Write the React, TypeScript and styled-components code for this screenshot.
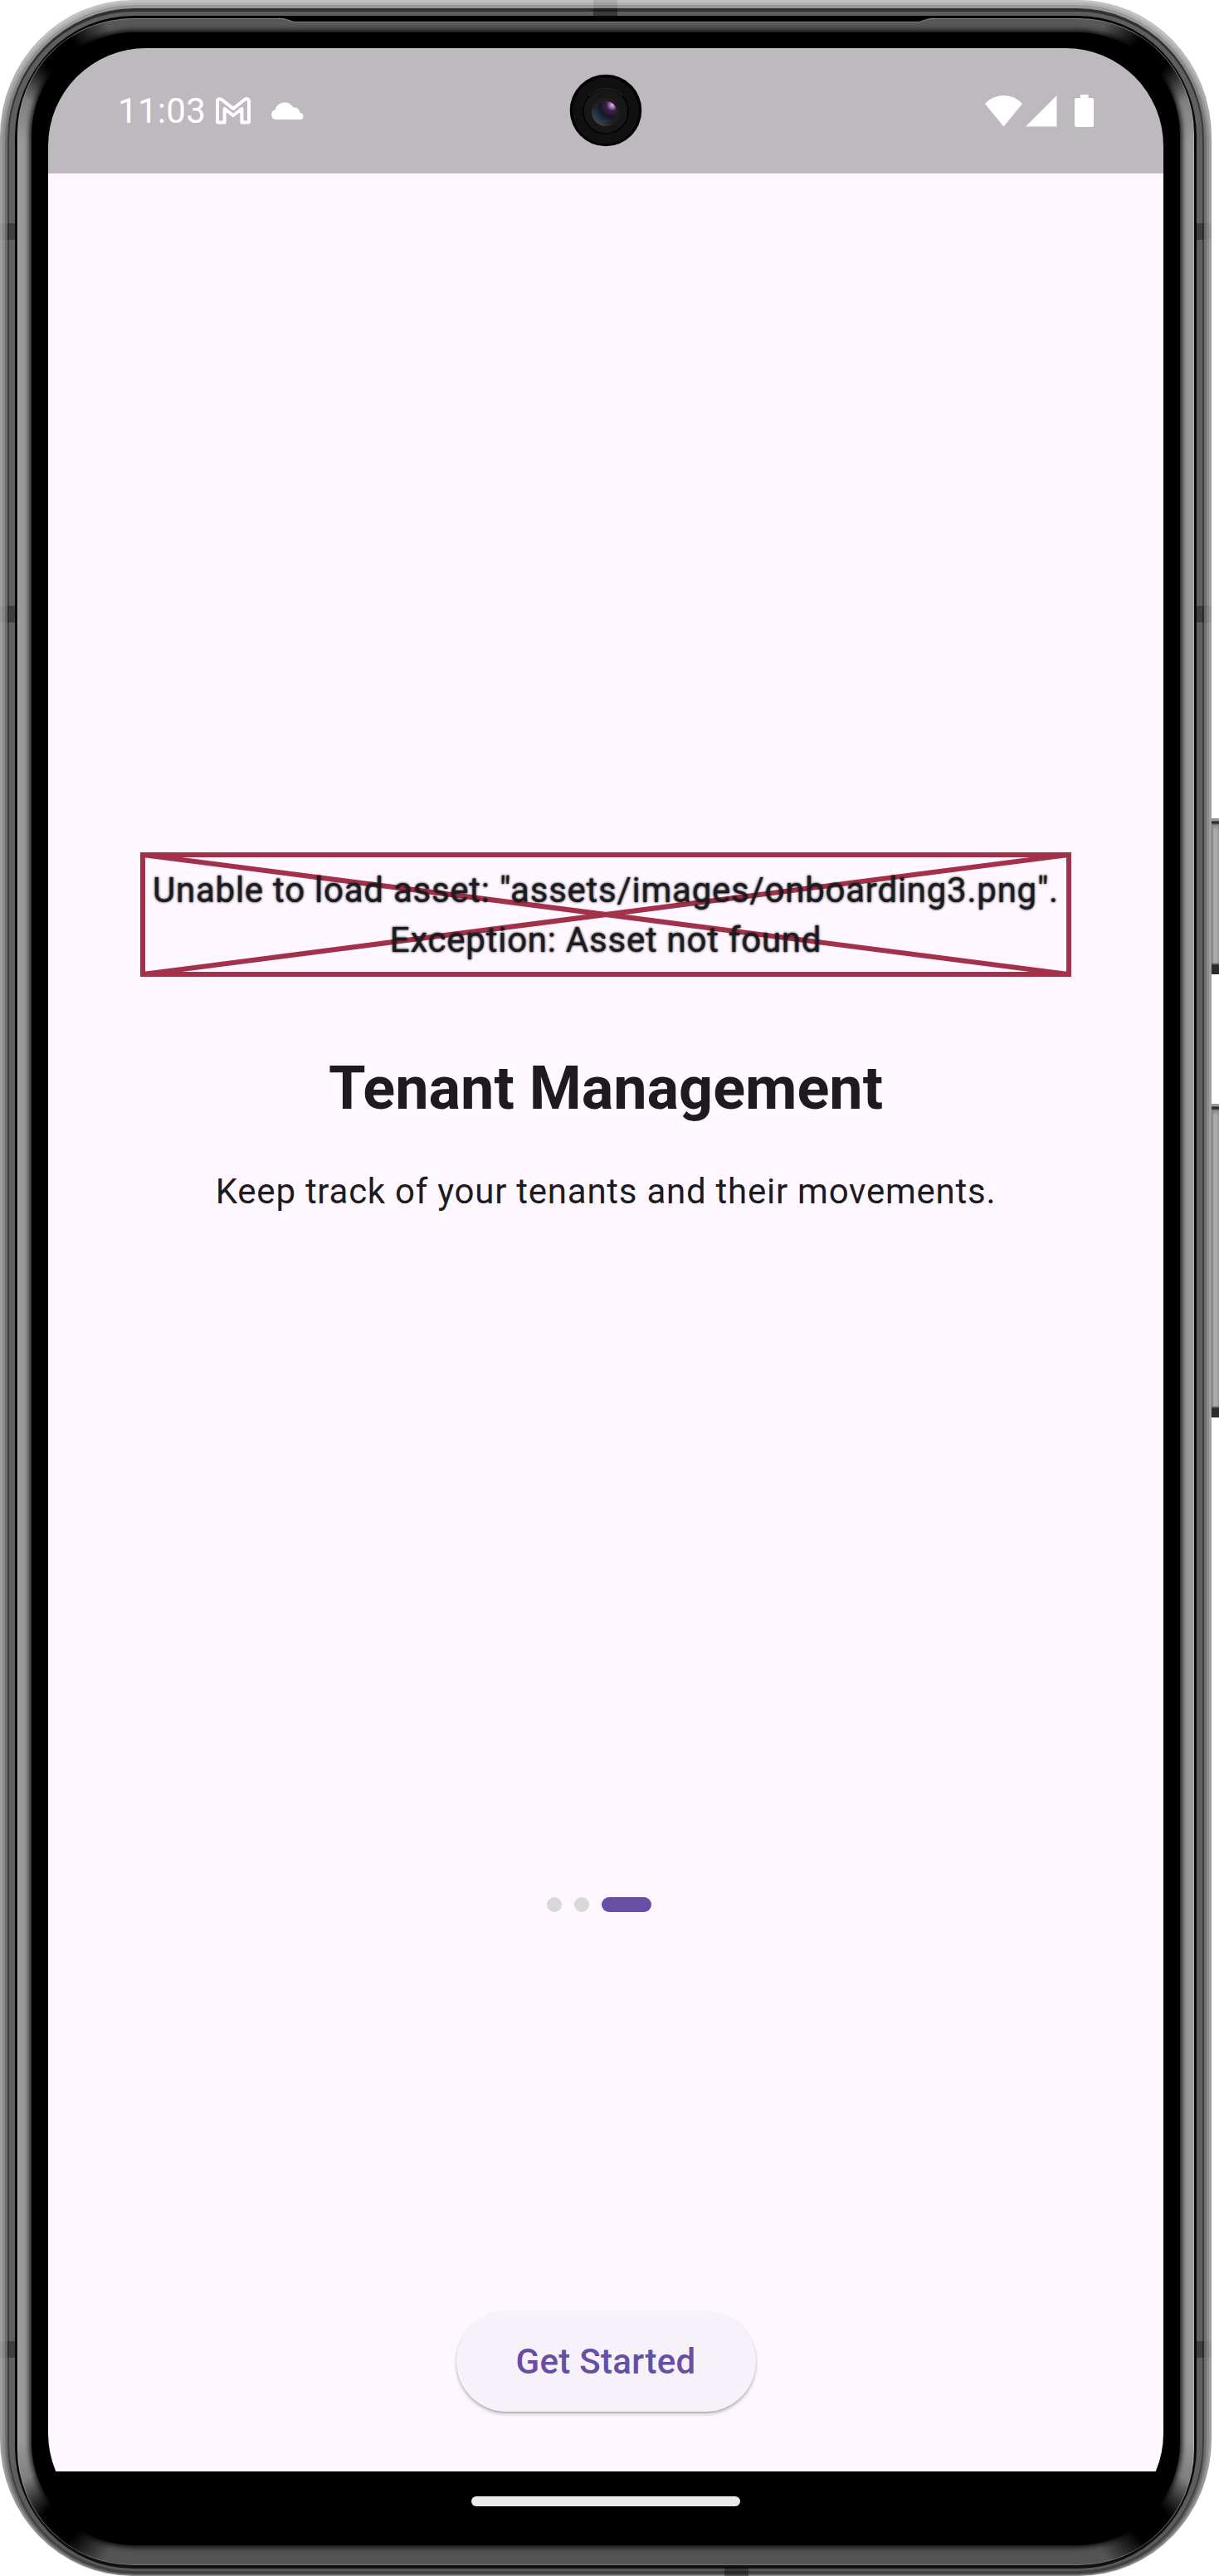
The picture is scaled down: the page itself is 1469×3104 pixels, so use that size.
import React from "react";
import styled, { createGlobalStyle } from "styled-components";

const GlobalStyle = createGlobalStyle`
  body { margin: 0; background: #fff; overflow: hidden; }
  * { box-sizing: border-box; }
`;

const Stage = styled.div`
  display: flex;
  width: 1469px;
  height: 3104px;
  overflow: hidden;
  font-family: Roboto, "Noto Sans", sans-serif;
`;

const Phone = styled.div`
  position: relative;
  display: flex;
  width: 1460px;
  height: 3104px;
  flex: none;
`;

/* One concentric band of the metal case; colours run top / sides / bottom. */
const Ring = styled.div<{ $pad: string; $radius: string; $colors: [string, string, string] }>`
  display: flex;
  flex: 1;
  padding: ${(p) => p.$pad};
  border-radius: ${(p) => p.$radius};
  background: linear-gradient(
    ${(p) => p.$colors[0]} 30px,
    ${(p) => p.$colors[1]} 170px,
    ${(p) => p.$colors[1]} calc(100% - 150px),
    ${(p) => p.$colors[2]} calc(100% - 20px)
  );
`;

const Bevel = styled.div`
  display: flex;
  flex: 1;
  padding: 16px 16px 23px;
  border-radius: 137px;
  background:
    radial-gradient(circle at 50px 42px, #000 22px, transparent 68px),
    radial-gradient(circle at calc(100% - 50px) 42px, #000 22px, transparent 68px),
    radial-gradient(circle at 50px calc(100% - 48px), #000 22px, transparent 68px),
    radial-gradient(circle at calc(100% - 50px) calc(100% - 48px), #000 22px, transparent 68px),
    linear-gradient(#585858 20px, #9a9a9a 150px, #9a9a9a calc(100% - 150px), #545454 calc(100% - 30px));
`;

const Glass = styled.div`
  display: flex;
  flex: 1;
  flex-direction: column;
  align-items: center;
  padding: 19px 20px 0;
  border-radius: 124px;
  background: #000;
  box-shadow: 0 0 7px 2px #000;
`;

const Screen = styled.div`
  display: flex;
  flex-direction: column;
  flex: none;
  width: 1344px;
  height: 2992px;
  overflow: hidden;
  border-radius: 118px;
  background: #000;
`;

const StatusBar = styled.header`
  position: relative;
  display: flex;
  flex: none;
  align-items: center;
  justify-content: space-between;
  height: 151px;
  padding: 0 83px 0 84px;
  background: #beb9bf;
  color: #fff;
`;

const StatusGroup = styled.div`
  display: flex;
  align-items: center;
  height: 151px;
`;

const Clock = styled.span`
  width: 118px;
  font-size: 42px;
  line-height: 151px;
  letter-spacing: 0.3px;
  white-space: nowrap;
`;

const CloudSlot = styled.span`
  display: flex;
  margin: 0 0 2px 24px;
`;

const Camera = styled.svg`
  position: absolute;
  left: 628px;
  top: 31px;
`;

const Page = styled.main`
  display: flex;
  flex-direction: column;
  align-items: center;
  flex: none;
  height: 2769px;
  padding-top: 818px;
  background: #fef7ff;
  color: #1d1b20;
`;

const AssetError = styled.div`
  position: relative;
  width: 1122px;
  height: 150px;
  padding-top: 16px;
  flex: none;
`;

const Cross = styled.svg`
  position: absolute;
  inset: 0;
`;

const ErrorText = styled.p`
  position: relative;
  margin: 0;
  font-size: 42px;
  font-weight: 400;
  line-height: 60px;
  letter-spacing: 0.75px;
  text-align: center;
  white-space: nowrap;
  text-shadow: 0 0 3px #000;
`;

const Title = styled.h1`
  margin: 93px 0 0;
  font-size: 72px;
  font-weight: 700;
  line-height: 84px;
  white-space: nowrap;
`;

const Subtitle = styled.p`
  margin: 52px 0 0;
  font-size: 42px;
  line-height: 60px;
  letter-spacing: 0.75px;
  white-space: nowrap;
`;

const Dots = styled.div`
  display: flex;
  gap: 15px;
  margin-top: 819.5px;
  padding-right: 16px;
`;

const Dot = styled.span<{ $active?: boolean }>`
  width: ${(p) => (p.$active ? "60px" : "18px")};
  height: 18px;
  border-radius: 9px;
  background: ${(p) => (p.$active ? "#6750a4" : "#d8d8d8")};
`;

const StartButton = styled.button`
  width: 361px;
  height: 121px;
  margin-top: 481.5px;
  padding: 0;
  border: 0;
  border-radius: 61px;
  background: #f7f2fa;
  color: #6750a4;
  font: 500 42px/120px Roboto, sans-serif;
  letter-spacing: 0.3px;
  box-shadow: 0 3px 5px -1px rgba(0, 0, 0, 0.3), 0 1px 2px rgba(0, 0, 0, 0.14);
`;

const NavBar = styled.footer`
  display: flex;
  justify-content: center;
  padding-top: 30px;
`;

const NavHandle = styled.span`
  width: 324px;
  height: 12px;
  border-radius: 6px;
  background: #ebebeb;
`;

const SideSeam = styled.i<{ $top: number; $right?: boolean }>`
  position: absolute;
  top: ${(p) => p.$top}px;
  ${(p) => (p.$right ? "right: 0; transform: scaleX(-1);" : "left: 0;")}
  width: 18px;
  height: 20px;
  background: linear-gradient(90deg, rgba(0, 0, 0, 0.05) 9px, rgba(0, 0, 0, 0.34) 9px);
`;

const EdgeSeam = styled.i<{ $left: number; $bottom?: boolean }>`
  position: absolute;
  left: ${(p) => p.$left}px;
  ${(p) => (p.$bottom ? "bottom: 0; height: 10px;" : "top: 0; height: 19px;")}
  width: 29px;
  background: ${(p) => (p.$bottom ? "rgba(0, 0, 0, 0.35)" : "linear-gradient(rgba(0,0,0,.1) 10px, rgba(0,0,0,.38) 10px)")};
`;

const Earpiece = styled.svg`
  position: absolute;
  left: 336px;
  top: 20px;
`;

const Keys = styled.div`
  display: flex;
  flex-direction: column;
  gap: 156px;
  padding-top: 986px;
  width: 9px;
`;

const Key = styled.span<{ $height: number }>`
  height: ${(p) => p.$height}px;
  background:
    linear-gradient(#999 3px, #222 4px, #333 6px, #888 8px, transparent 14px),
    linear-gradient(0deg, #2c2c2c 11px, #555 12px, transparent 14px),
    linear-gradient(90deg, #777 1px, #a9a9a9 2px, #a9a9a9 7px, #888);
`;

const rings: { pad: string; radius: string; colors: [string, string, string] }[] = [
  { pad: "3px 3px 1px", radius: "160px / 165px", colors: ["#c2c2c2", "#9f9f9f", "#8c8c8c"] },
  { pad: "3px 3px 1px", radius: "158px / 163px", colors: ["#b2b2b2", "#8a8a8a", "#6c6c6c"] },
  { pad: "4px 3px 1px", radius: "156px / 160px", colors: ["#979797", "#6e6e6e", "#505050"] },
  { pad: "4px 2px 3px", radius: "153px / 157px", colors: ["#303030", "#3e3e3e", "#404040"] },
  { pad: "5px 7px 3px", radius: "150px / 153px", colors: ["#5e5e5e", "#606060", "#585858"] },
  { pad: "3px 3px 4px", radius: "143px / 146px", colors: ["#050505", "#080808", "#101010"] },
  { pad: "1px", radius: "139px", colors: ["#808080", "#b4b4b4", "#707070"] },
];

const CaseRings = ({ index = 0, children }: { index?: number; children: React.ReactNode }) => {
  if (index === rings.length) return <>{children}</>;
  const r = rings[index];
  return (
    <Ring $pad={r.pad} $radius={r.radius} $colors={r.colors}>
      <CaseRings index={index + 1}>{children}</CaseRings>
    </Ring>
  );
};

const MailIcon = () => (
  <svg width="42" height="33" viewBox="0 0 42 33" fill="none" stroke="#fff" strokeWidth="4" strokeLinejoin="round">
    <path d="M2 5.500C2 2.400 5 1.200 7.500 3.200L21 14 34.500 3.200C37 1.200 40 2.400 40 5.500V29.200Q40 30.600 38.500 30.600H31.400V14L21 22.300 10.600 14V30.600H3.500Q2 30.600 2 29.200Z" />
  </svg>
);

const CloudIcon = () => (
  <svg width="42" height="24" viewBox="0 0 42 24" fill="#fff">
    <path d="M6.5 23A6 6 0 0 1 5.7 11.2A11.8 11.8 0 0 1 27.2 8.2A7.6 7.6 0 0 1 35.6 15A4.2 4.2 0 0 1 37 23Z" />
  </svg>
);

const SignalIcons = () => (
  <svg width="132" height="40" viewBox="0 0 132 40" fill="#fff">
    <path d="M0 11Q9.500 1 22.500 1T45 11L22.500 38.500Z" />
    <path d="M86.500 1V38.500H49Z" />
    <path d="M115 0H124.500V4H129Q131 4 131 6V37Q131 39 129 39H110Q108 39 108 37V6Q108 4 110 4H115Z" />
  </svg>
);

const CameraLens = () => (
  <Camera width="88" height="88" viewBox="0 0 88 88">
    <defs>
      <radialGradient id="lens" cx="0.8" cy="0.2" r="0.9">
        <stop offset="0" stopColor="#e9b8f5" />
        <stop offset="0.12" stopColor="#a878bd" />
        <stop offset="0.3" stopColor="#3a2148" />
        <stop offset="0.65" stopColor="#1b1524" />
        <stop offset="1" stopColor="#1c3e55" />
      </radialGradient>
      <linearGradient id="rim" x1="0" y1="1" x2="1" y2="0">
        <stop offset="0" stopColor="#5c5c5c" />
        <stop offset="0.4" stopColor="#202020" />
        <stop offset="1" stopColor="#1c1c1c" />
      </linearGradient>
    </defs>
    <circle cx="44" cy="44" r="43.300" fill="#000" />
    <circle cx="44" cy="44.500" r="40" fill="#101010" />
    <circle cx="44" cy="45" r="27" fill="#171717" stroke="#020202" strokeWidth="1.500" />
    <path d="M24 26A28 28 0 0 1 64 26" fill="none" stroke="#303030" strokeWidth="1" />
    <circle cx="44" cy="46" r="17" fill="url(#rim)" />
    <circle cx="44" cy="45.500" r="13" fill="url(#lens)" />
  </Camera>
);

export default function App() {
  return (
    <>
      <GlobalStyle />
      <Stage>
        <Phone>
          <CaseRings>
            <Bevel>
              <Glass>
                <Screen>
                  <StatusBar>
                    <StatusGroup>
                      <Clock>11:03</Clock>
                      <MailIcon />
                      <CloudSlot>
                        <CloudIcon />
                      </CloudSlot>
                    </StatusGroup>
                    <SignalIcons />
                    <CameraLens />
                  </StatusBar>
                  <Page>
                    <AssetError>
                      <Cross width="1122" height="150" fill="none" stroke="#a23149" strokeWidth="6">
                        <rect x="3" y="3" width="1116" height="144" />
                        <path d="M3 3L1119 147M1119 3L3 147" />
                      </Cross>
                      <ErrorText>
                        Unable to load asset: "assets/images/onboarding3.png".
                        <br />
                        Exception: Asset not found
                      </ErrorText>
                    </AssetError>
                    <Title>Tenant Management</Title>
                    <Subtitle>Keep track of your tenants and their movements.</Subtitle>
                    <Dots>
                      <Dot />
                      <Dot />
                      <Dot $active />
                    </Dots>
                    <StartButton>Get Started</StartButton>
                  </Page>
                  <NavBar>
                    <NavHandle />
                  </NavBar>
                </Screen>
              </Glass>
            </Bevel>
          </CaseRings>
          <Earpiece width="790" height="10" viewBox="0 0 790 10">
            <path d="M0 0V1.500Q8 2 18 6H772Q782 2 790 1.500V0Z" fill="#000" />
            <path d="M0 2Q8 2.500 18 6.500H772Q782 2.500 790 2" fill="none" stroke="#808080" />
          </Earpiece>
          {[269, 730, 2821].map((top) => (
            <React.Fragment key={top}>
              <SideSeam $top={top} />
              <SideSeam $top={top} $right />
            </React.Fragment>
          ))}
          <EdgeSeam $left={715} />
          <EdgeSeam $left={873} $bottom />
        </Phone>
        <Keys>
          <Key $height={188} />
          <Key $height={378} />
        </Keys>
      </Stage>
    </>
  );
}
